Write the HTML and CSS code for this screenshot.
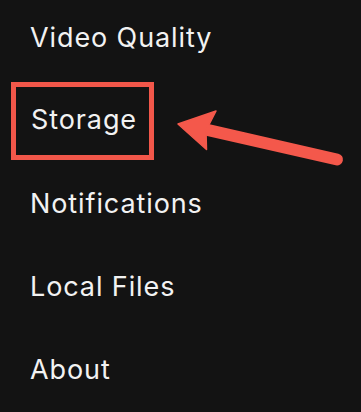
FILE: index.html
```html
<!DOCTYPE html>
<html lang="en">

<head>
    <meta charset="UTF-8">
    <title>Settings</title>
    <link rel="stylesheet" href="styles.css">
</head>

<body>
    <div class="screen">
        <ul class="settings-list">
            <li>Video Quality</li>
            <li class="highlight"><span class="boxed">Storage</span></li>
            <li>Notifications</li>
            <li>Local Files</li>
            <li>About</li>
        </ul>

        <svg class="arrow" viewBox="0 0 361 412" width="361" height="412">
            <line x1="204" y1="129.2" x2="337" y2="159.5" stroke="#f4584b" stroke-width="12" stroke-linecap="round" />
            <polygon points="178,124 216,111 206,130.5 206.5,149.5" fill="#f4584b" stroke="#f4584b" stroke-width="1.5" stroke-linejoin="round" />
        </svg>
    </div>
</body>

</html>
```

FILE: styles.css
```css
body {
    margin: 0;
    background: #131313;
    font-family: Inter, 'Noto Sans', sans-serif;
}

.screen {
    position: relative;
    width: 361px;
    height: 412px;
    overflow: hidden;
}

.settings-list {
    list-style: none;
    margin: 0;
    padding: 2px 0 0 30px;
}

.settings-list li {
    color: #f2f2f2;
    font-size: 27px;
    font-weight: 400;
    letter-spacing: 0.9px;
    line-height: 72px;
    margin-bottom: 11px;
}

.settings-list li.highlight {
    margin-bottom: 8px;
}

.boxed {
    display: inline-block;
    vertical-align: top;
    line-height: 65px;
    padding: 0 12px 3px 15px;
    margin: -3px 0 0 -19px;
    border: 5px solid #f2574a;
}

.arrow {
    position: absolute;
    top: 0;
    left: 0;
}
```
